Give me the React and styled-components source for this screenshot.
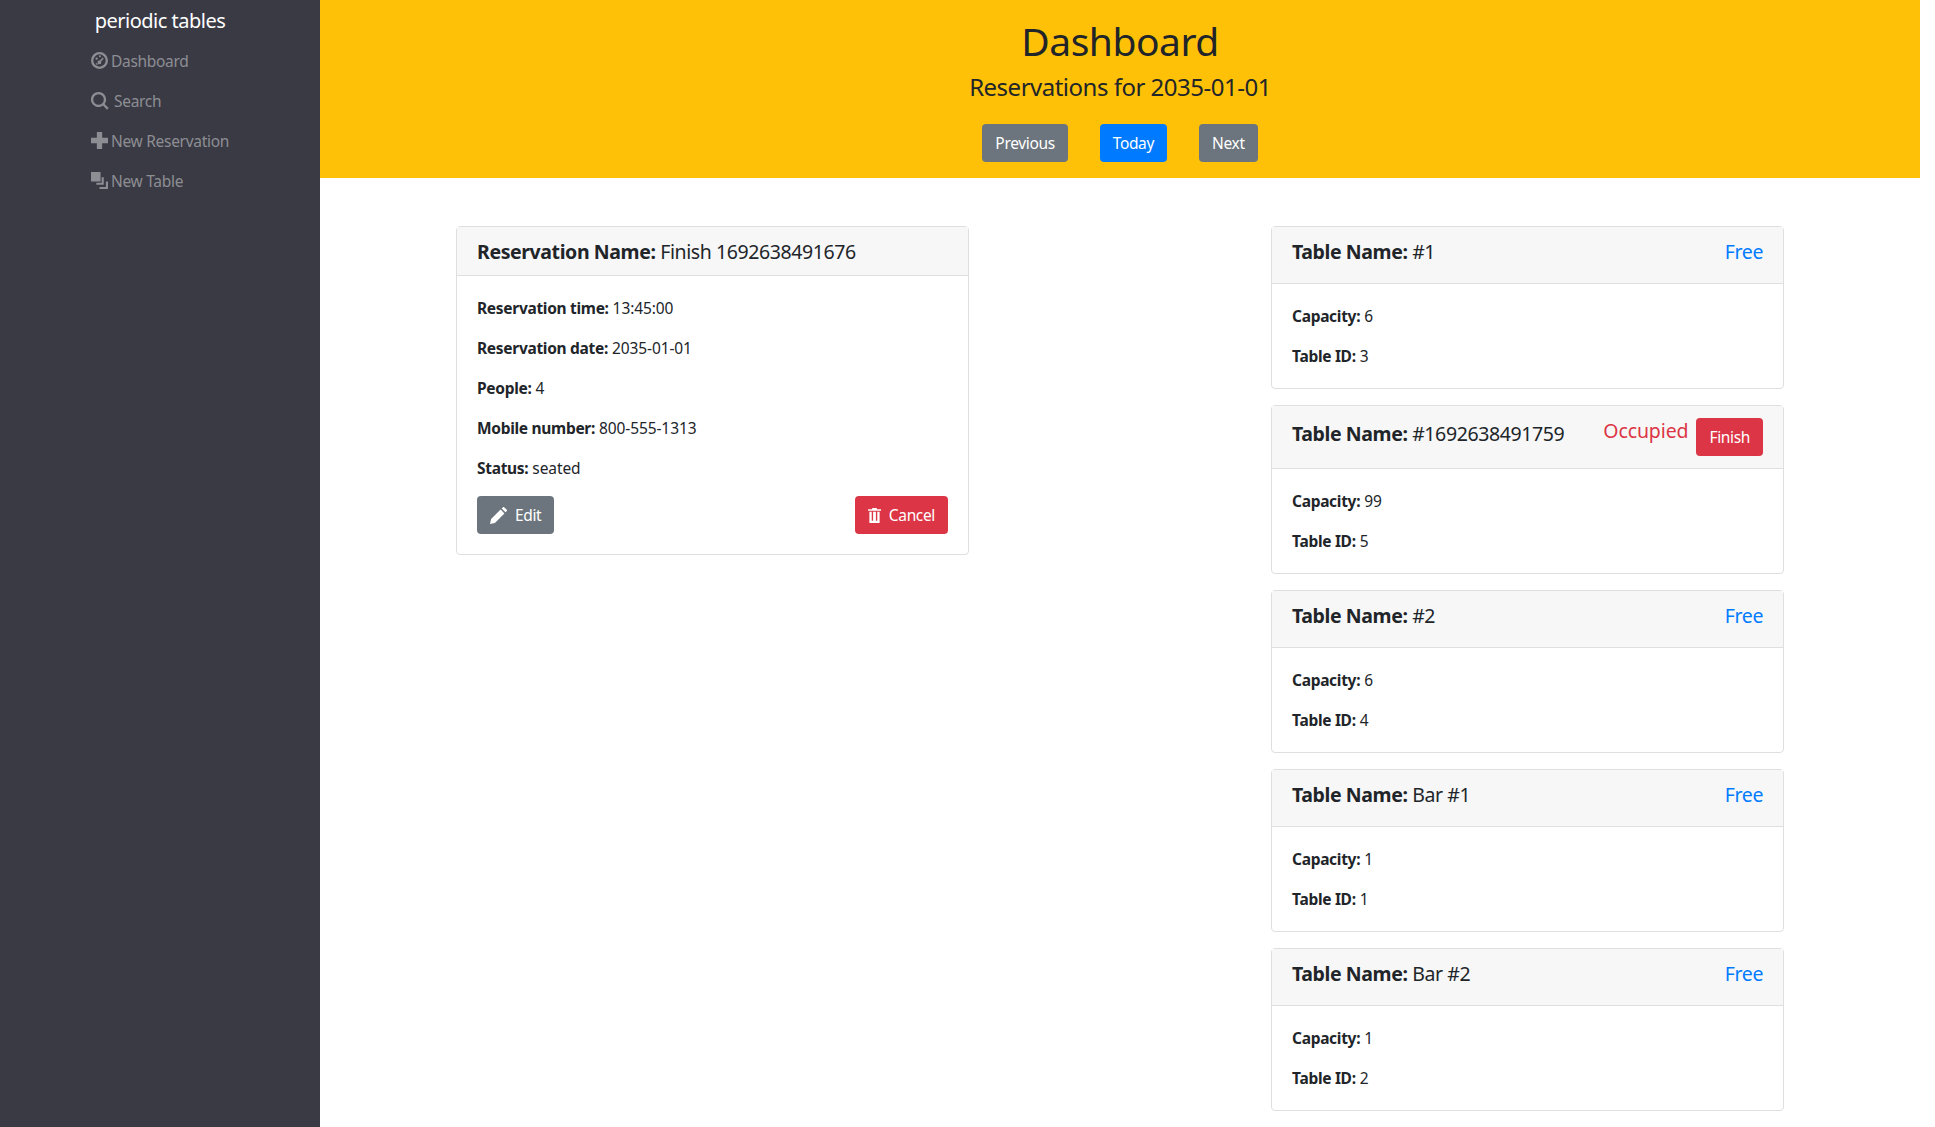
import React from 'react';
import styled, { createGlobalStyle } from 'styled-components';

const GlobalStyle = createGlobalStyle`
  html, body {
    margin: 0;
    padding: 0;
    background: #fff;
  }
  body {
    font-family: "Noto Sans", "Open Sans", sans-serif;
    font-size: 16px;
    line-height: 1.5;
    color: #212529;
  }
  * {
    box-sizing: border-box;
  }
`;

const Page = styled.div`
  display: flex;
  width: 1920px;
  min-height: 1127px;
`;

const Sidebar = styled.nav`
  flex: 0 0 320px;
  background: #3a3a45;
  display: flex;
  flex-direction: column;
  align-items: center;
`;

const Brand = styled.div`
  color: #fff;
  font-size: 20px;
  line-height: 42px;
  letter-spacing: -0.5px;
`;

const NavList = styled.ul`
  list-style: none;
  margin: 0;
  padding: 0 0 0 1px;
  width: 140px;
`;

const NavItem = styled.li`
  display: flex;
  align-items: center;
  height: 40px;
  color: #8d8e93;
  font-size: 15.5px;
  letter-spacing: -0.3px;
  white-space: nowrap;
  gap: ${p => p.$gap || 3}px;

  svg {
    flex: none;
    margin-bottom: 3px;
  }
`;

const Main = styled.main`
  flex: 1;
  min-width: 0;
`;

const Banner = styled.header`
  background: #ffc107;
  height: 178px;
  padding-top: 15px;
  text-align: center;
`;

const Title = styled.h1`
  margin: 0;
  font-size: 39px;
  font-weight: 400;
  line-height: 52px;
  letter-spacing: -0.5px;
`;

const Subtitle = styled.h4`
  margin: 0;
  padding-top: 2px;
  font-size: 24px;
  font-weight: 400;
  line-height: 36px;
  letter-spacing: -0.5px;
`;

const ButtonRow = styled.div`
  display: flex;
  justify-content: center;
  gap: 32px;
  margin-top: 19px;
`;

const Button = styled.button`
  display: inline-flex;
  align-items: center;
  gap: 8px;
  height: 38px;
  padding: 0 13px;
  border: 0;
  border-radius: 4px;
  color: #fff;
  background: ${p => p.$bg || '#6c757d'};
  font-family: inherit;
  font-size: 15.5px;
  letter-spacing: -0.35px;
`;

const Columns = styled.div`
  display: flex;
  justify-content: space-between;
  padding: 48px 136px 0;
`;

const Column = styled.div`
  width: 513px;
  display: flex;
  flex-direction: column;
  gap: 16px;
`;

const Card = styled.section`
  border: 1px solid #dfdfdf;
  border-radius: 4px;
  background: #fff;
`;

const CardHead = styled.div`
  display: flex;
  justify-content: space-between;
  align-items: flex-start;
  height: ${p => p.$h}px;
  padding: 12px 20px 0;
  background: #f7f7f7;
  border-bottom: 1px solid #dfdfdf;
  font-size: 19.5px;
  line-height: 26px;
  letter-spacing: -0.4px;
`;

const HeadName = styled.span`
  margin-top: ${p => p.$offset || 0}px;
`;

const HeadStatus = styled.div`
  display: flex;
  align-items: flex-start;
  gap: 8px;
  color: ${p => p.$color};
  letter-spacing: ${p => p.$spacing || '-0.4px'};
`;

const CardBody = styled.div`
  padding: 20px 20px 0;
  height: ${p => p.$h}px;
`;

const Line = styled.p`
  margin: 0 0 16px;
  font-size: 15.5px;
  line-height: 24px;
  letter-spacing: -0.1px;

  strong {
    letter-spacing: -0.3px;
  }
`;

const Actions = styled.div`
  display: flex;
  justify-content: space-between;
`;

const DashIcon = () => (
  <svg width="17" height="17" viewBox="0 0 16 16" fill="currentColor">
    <path fillRule="evenodd" d="M8 0a8 8 0 1 1 0 16A8 8 0 0 1 8 0zm0 2.2a5.8 5.8 0 1 0 0 11.6A5.8 5.8 0 0 0 8 2.2zM4.2 6.2a1.1 1.1 0 1 1 2.2 0 1.1 1.1 0 0 1-2.2 0zM7.4 4a1 1 0 1 1 2 0 1 1 0 0 1-2 0zM11 5.2l1 .9-2.6 3a1.7 1.7 0 1 1-1.1-1zM4.4 10.6h1.4l.8 1.4H5.2z" />
  </svg>
);

const SearchIcon = () => (
  <svg width="18" height="18" viewBox="0 0 16 16" fill="currentColor">
    <path fillRule="evenodd" d="M6.7 0a6.7 6.7 0 0 1 5.4 10.6l3.6 3.6-1.5 1.5-3.6-3.6A6.7 6.7 0 1 1 6.7 0zm0 2a4.7 4.7 0 1 0 0 9.4 4.7 4.7 0 0 0 0-9.4z" />
  </svg>
);

const PlusIcon = () => (
  <svg width="17" height="17" viewBox="0 0 16 16" fill="currentColor">
    <path d="M5.5 0h5v5.5H16v5h-5.5V16h-5v-5.5H0v-5h5.5z" />
  </svg>
);

const TablesIcon = () => (
  <svg width="17" height="17" viewBox="0 0 16 16" fill="currentColor">
    <path d="M0 0h9v9H0zM10 5h2v7H5v-2h5zM14 9h2v7H8v-2h6z" />
  </svg>
);

const PencilIcon = () => (
  <svg width="17" height="17" viewBox="0 0 16 16" fill="currentColor">
    <path d="M0 16l1-4.6L10 2.4 13.6 6l-9 9zM11 1.4 12.2.2a.8.8 0 0 1 1.1 0l2.5 2.5a.8.8 0 0 1 0 1.1L14.6 5z" />
  </svg>
);

const TrashIcon = () => (
  <svg width="13" height="17" viewBox="0 0 14 16" fill="currentColor">
    <path d="M4.5 0h5v1.2H14v1.8H0V1.2h4.5zM1.5 4H4v9.6h1.5V4h3v9.6H10V4h2.5v12h-11z" />
  </svg>
);

const tables = [
  { name: '#1', capacity: 6, id: 3 },
  { name: '#1692638491759', capacity: 99, id: 5, occupied: true },
  { name: '#2', capacity: 6, id: 4 },
  { name: 'Bar #1', capacity: 1, id: 1 },
  { name: 'Bar #2', capacity: 1, id: 2 },
];

const Field = ({ label, value }) => (
  <Line><strong>{label}:</strong> {value}</Line>
);

const TableCard = ({ table }) => (
  <Card>
    <CardHead $h={table.occupied ? 63 : 57}>
      <HeadName $offset={table.occupied ? 3 : 0}>
        <strong>Table Name:</strong> {table.name}
      </HeadName>
      {table.occupied ? (
        <HeadStatus $color="#dc3545" $spacing="-0.1px">
          Occupied
          <Button $bg="#dc3545">Finish</Button>
        </HeadStatus>
      ) : (
        <HeadStatus $color="#007bff">Free</HeadStatus>
      )}
    </CardHead>
    <CardBody $h={104}>
      <Field label="Capacity" value={table.capacity} />
      <Field label="Table ID" value={table.id} />
    </CardBody>
  </Card>
);

export default function App() {
  return (
    <Page>
      <GlobalStyle />
      <Sidebar>
        <Brand>periodic tables</Brand>
        <NavList>
          <NavItem><DashIcon />Dashboard</NavItem>
          <NavItem $gap={5}><SearchIcon />Search</NavItem>
          <NavItem><PlusIcon />New Reservation</NavItem>
          <NavItem><TablesIcon />New Table</NavItem>
        </NavList>
      </Sidebar>
      <Main>
        <Banner>
          <Title>Dashboard</Title>
          <Subtitle>Reservations for 2035-01-01</Subtitle>
          <ButtonRow>
            <Button>Previous</Button>
            <Button $bg="#007bff">Today</Button>
            <Button>Next</Button>
          </ButtonRow>
        </Banner>
        <Columns>
          <Column>
            <Card>
              <CardHead $h={49}>
                <HeadName>
                  <strong>Reservation Name:</strong> Finish 1692638491676
                </HeadName>
              </CardHead>
              <CardBody $h={278}>
                <Field label="Reservation time" value="13:45:00" />
                <Field label="Reservation date" value="2035-01-01" />
                <Field label="People" value="4" />
                <Field label="Mobile number" value="800-555-1313" />
                <Field label="Status" value="seated" />
                <Actions>
                  <Button><PencilIcon />Edit</Button>
                  <Button $bg="#dc3545"><TrashIcon />Cancel</Button>
                </Actions>
              </CardBody>
            </Card>
          </Column>
          <Column>
            {tables.map(t => <TableCard key={t.id} table={t} />)}
          </Column>
        </Columns>
      </Main>
    </Page>
  );
}
